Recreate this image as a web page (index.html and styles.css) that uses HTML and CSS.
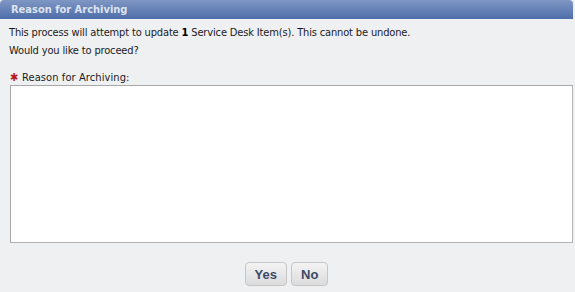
FILE: index.html
```html
<!DOCTYPE html>
<html lang="en">
<head>
  <meta charset="UTF-8">
  <title>Reason for Archiving</title>
  <link rel="stylesheet" href="styles.css">
</head>
<body>
  <div class="dialog">
    <div class="dialog-title">Reason for Archiving</div>

    <div class="dialog-body">
      <p class="message">This process will attempt to update <b>1</b> Service Desk Item(s). This cannot be undone.</p>
      <p class="message">Would you like to proceed?</p>

      <label class="field-label" for="reason"><span class="required">&#10033;</span>Reason for Archiving:</label>
      <textarea id="reason" class="reason-box"></textarea>
    </div>

    <div class="button-row">
      <button class="btn">Yes</button>
      <button class="btn">No</button>
    </div>
  </div>
</body>
</html>
```

FILE: styles.css
```css
body {
  font-family: "DejaVu Sans Condensed", "Liberation Sans", Arial, sans-serif;
  margin: 0;
  background-color: #eef0f2;
}

.dialog {
  width: 575px;
  height: 292px;
}

.dialog-title {
  width: 562px;
  height: 19px;
  line-height: 19px;
  padding-left: 11px;
  margin-right: 2px;
  font-size: 11px;
  font-weight: bold;
  color: #dde4f0;
  background: linear-gradient(#8097c4, #4e6da9);
  border-radius: 4px 4px 0 0;
}

.dialog-body {
  padding: 5px 3px 0 9px;
}

.message {
  margin: 0;
  font-size: 11px;
  line-height: 18px;
  letter-spacing: -0.15px;
  color: #1b1b1b;
}

.message b {
  color: #000;
}

.field-label {
  display: block;
  margin-top: 10px;
  font-size: 11px;
  line-height: 15px;
  letter-spacing: 0.1px;
  color: #1b1b1b;
}

.required {
  display: inline-block;
  width: 12px;
  margin-left: 1px;
  color: #b51c1c;
  font-size: 11px;
}

.reason-box {
  display: block;
  box-sizing: border-box;
  width: 563px;
  height: 158px;
  margin: 0 0 0 1px;
  border: 1px solid #b4b4b4;
  border-top-color: #a8a8a8;
  border-left-color: #a8a8a8;
  background-color: #fff;
  resize: none;
}

.button-row {
  display: flex;
  justify-content: center;
  gap: 4px;
  margin-top: 19px;
  padding-right: 2px;
}

.btn {
  height: 24px;
  padding: 0 9px;
  font-family: "Liberation Sans", Arial, sans-serif;
  font-size: 13px;
  font-weight: bold;
  color: #3c4a66;
  background: linear-gradient(#f3f3f3, #dcdcdc);
  border: 1px solid #c6c6c6;
  border-radius: 4px;
}
```
